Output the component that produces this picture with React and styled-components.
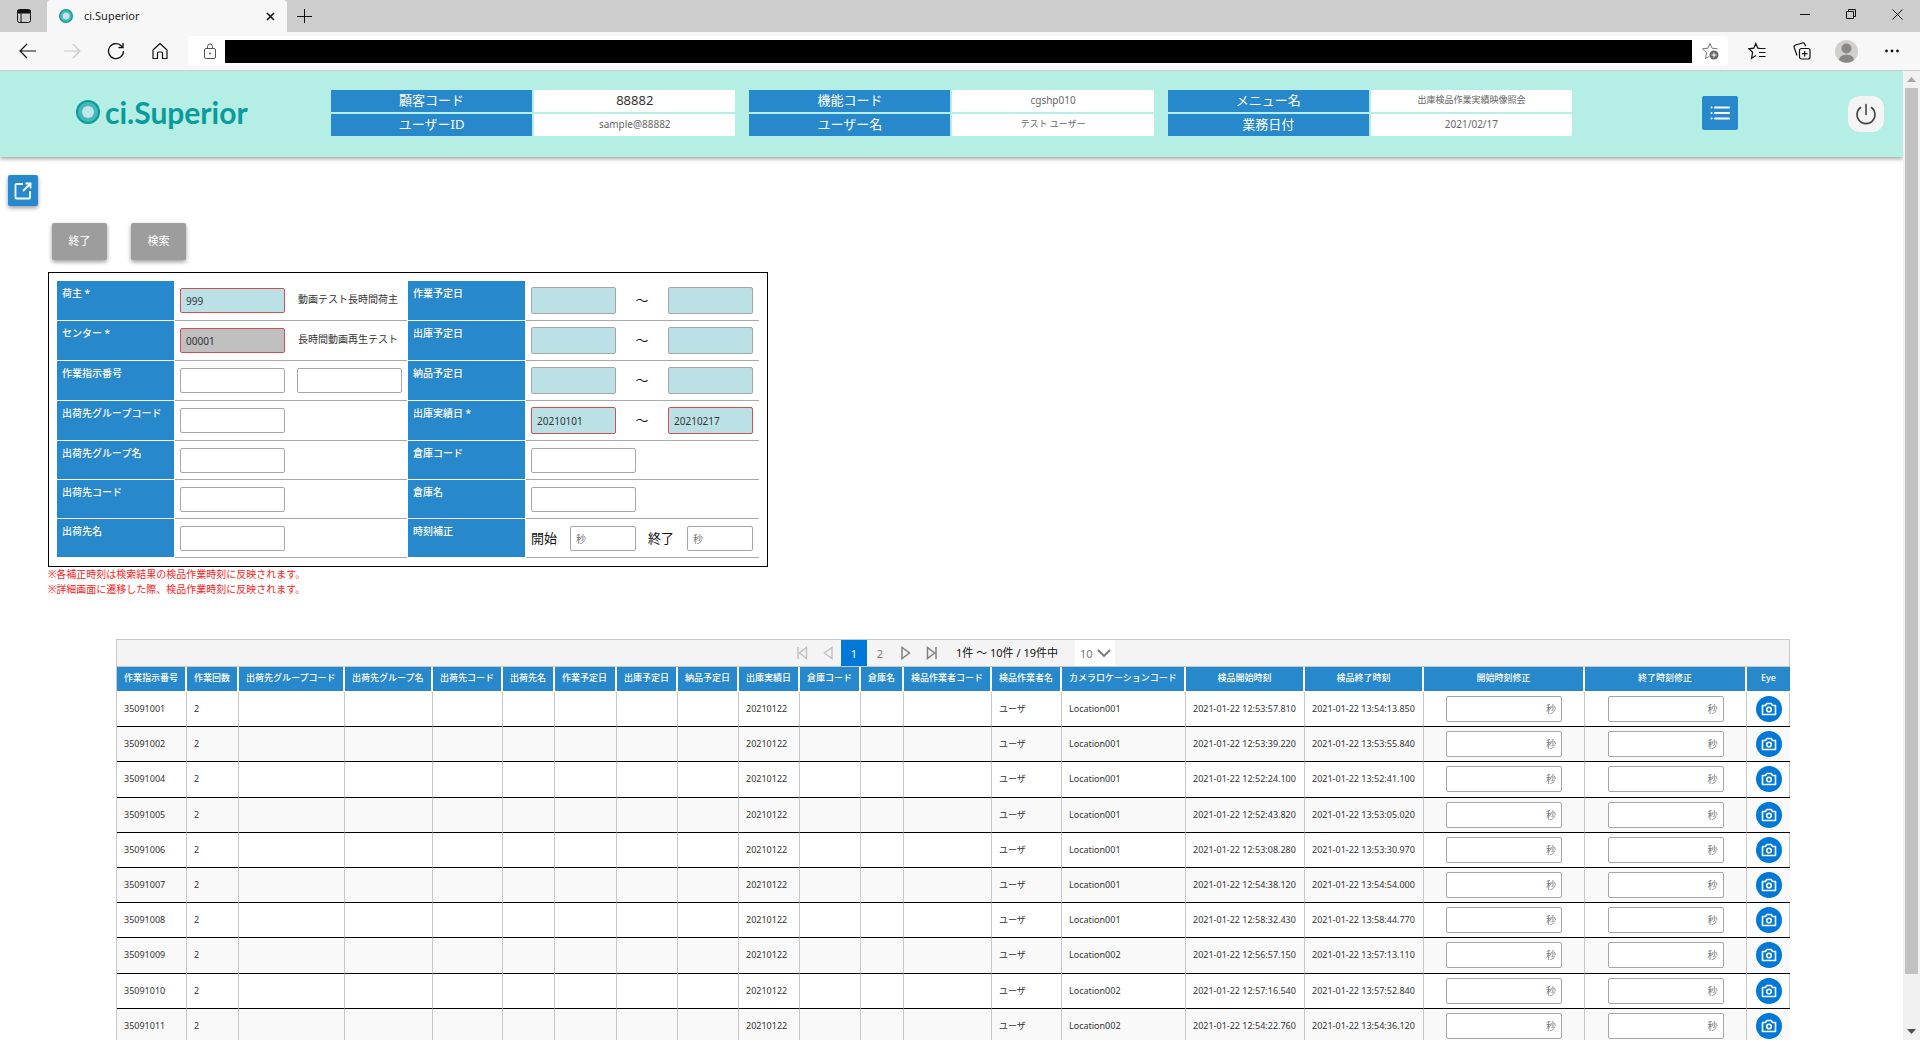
import React from 'react'
import styled, { createGlobalStyle, css } from 'styled-components'

const BLUE = '#2788cb'
const MINT = '#b5eee4'
const SANS = '"Noto Sans", "Noto Sans CJK JP", sans-serif'

const HEADER_INFO = [
	[{ label: '顧客コード', value: '88882', size: 13 }, { label: 'ユーザーID', value: 'sample@88882' }],
	[{ label: '機能コード', value: 'cgshp010' }, { label: 'ユーザー名', value: 'テスト ユーザー', size: 9 }],
	[{ label: 'メニュー名', value: '出庫検品作業実績映像照会', size: 9 }, { label: '業務日付', value: '2021/02/17' }],
]

const COLUMNS = [
	['作業指示番号', 70], ['作業回数', 52], ['出荷先グループコード', 106], ['出荷先グループ名', 88],
	['出荷先コード', 70], ['出荷先名', 52], ['作業予定日', 62], ['出庫予定日', 61], ['納品予定日', 61],
	['出庫実績日', 61], ['倉庫コード', 61], ['倉庫名', 43], ['検品作業者コード', 88], ['検品作業者名', 70],
	['カメラロケーションコード', 124], ['検品開始時刻', 119], ['検品終了時刻', 119],
	['開始時刻修正', 161], ['終了時刻修正', 162], ['Eye', 43],
]

const ROWS = [
	['35091001', 'Location001', '12:53:57.810', '13:54:13.850'],
	['35091002', 'Location001', '12:53:39.220', '13:53:55.840'],
	['35091004', 'Location001', '12:52:24.100', '13:52:41.100'],
	['35091005', 'Location001', '12:52:43.820', '13:53:05.020'],
	['35091006', 'Location001', '12:53:08.280', '13:53:30.970'],
	['35091007', 'Location001', '12:54:38.120', '13:54:54.000'],
	['35091008', 'Location001', '12:58:32.430', '13:58:44.770'],
	['35091009', 'Location002', '12:56:57.150', '13:57:13.110'],
	['35091010', 'Location002', '12:57:16.540', '13:57:52.840'],
	['35091011', 'Location002', '12:54:22.760', '13:54:36.120'],
]

const Icon = ({ size = 18, view = 18, width = 1, color = '#111', children }) => (
	<svg width={ size } height={ size } viewBox={ `0 0 ${ view } ${ view }` } fill="none" stroke={ color } strokeWidth={ width } aria-hidden="true">
		{ children }
	</svg>
)

const Ring = ({ width, height }) => (
	<svg width={ width } height={ height } viewBox="0 0 24 24" aria-hidden="true">
		<circle cx="12" cy="12" r="12" fill="#0a9b9b" />
		<circle cx="12" cy="12" r="10" fill="#45b7b7" />
		<circle cx="12" cy="12" r="6" fill="#bfe6ea" />
	</svg>
)

const Browser = () => (
	<>
		<TabStrip>
			<StripButton aria-label="タブ操作メニュー">
				<Icon size={ 16 } view={ 16 }>
					<rect x="1.5" y="1.5" width="13" height="13" rx="2" />
					<path d="M1.5 2.5h13v2.5h-13z" fill="#111" />
					<path d="M5 5v9.5" />
				</Icon>
			</StripButton>
			<Tab>
				<Ring width={ 14 } height={ 14 } />
				<TabTitle>ci.Superior</TabTitle>
				<TabButton aria-label="タブを閉じる">
					<Icon size={ 9 } view={ 9 } width={ 1.6 }><path d="M1 1l7 7M8 1l-7 7" /></Icon>
				</TabButton>
			</Tab>
			<TabButton aria-label="新しいタブ">
				<Icon size={ 16 } view={ 16 }><path d="M8.5 1v14M1 8.5h15" /></Icon>
			</TabButton>
			<WindowButtons>
				<TabButton aria-label="最小化"><Icon size={ 10 } view={ 10 }><path d="M0 5.5h10" /></Icon></TabButton>
				<TabButton aria-label="元に戻す">
					<Icon size={ 10 } view={ 10 }><path d="M.5 2.5h7v7h-7zM2.5 2.5v-2h7v7h-2" /></Icon>
				</TabButton>
				<TabButton aria-label="閉じる"><Icon size={ 11 } view={ 11 }><path d="M.5.5l10 10M10.5.5l-10 10" /></Icon></TabButton>
			</WindowButtons>
		</TabStrip>
		<Toolbar>
			<ToolButton aria-label="戻る"><Icon width={ 1.2 }><path d="M17 9H1.5M8 2L1 9l7 7" /></Icon></ToolButton>
			<ToolButton aria-label="進む" disabled><Icon color="#c9c9c9" width={ 1.2 }><path d="M1 9h15.5M10 2l7 7-7 7" /></Icon></ToolButton>
			<ToolButton aria-label="更新">
				<Icon width={ 1.3 }><path d="M16.5 9A7.5 7.5 0 1 1 14.7 4.2L16 5.5M16 1v4.5h-4.5" /></Icon>
			</ToolButton>
			<ToolButton aria-label="ホーム">
				<Icon width={ 1.2 }><path d="M2 8l7-6.5L16 8v8.5h-4.5V11a1 1 0 0 0-1-1h-3a1 1 0 0 0-1 1v5.5H2z" strokeLinejoin="round" /></Icon>
			</ToolButton>
			<AddressBar>
				<LockSlot>
					<Icon size={ 16 } view={ 16 } color="#555">
						<rect x="2.5" y="5.5" width="11" height="10" rx="1.5" />
						<path d="M5.5 5.5V3.5a2.5 2.5 0 0 1 5 0v2" />
						<circle cx="8" cy="10.5" r="1" fill="#555" stroke="none" />
					</Icon>
				</LockSlot>
				<Address aria-label="アドレス" readOnly />
				<ToolButton aria-label="お気に入りに追加">
					<Icon color="#777">
						<path d="M16.5 6.800l-5.500-.6L9 1.500 7 6.200l-5.500.6 4 3.800L4.500 16.500l4-2.200" />
						<circle cx="13" cy="13" r="4.500" fill="#666" stroke="none" />
						<path d="M13 10.500v5M10.500 13h5" stroke="#fff" />
					</Icon>
				</ToolButton>
			</AddressBar>
			<ToolButtons>
				<ToolButton aria-label="お気に入り">
					<Icon width={ 1.2 }><path d="M12.500 6.500L9.800 6.200 7.800 1.500 5.800 6.200 1 6.800l3.600 3.500-1 5.900 4.400-2.700M11.500 6.500h6M11 10.500h6.500M11 14.500h6.500" /></Icon>
				</ToolButton>
				<ToolButton aria-label="コレクション">
					<Icon width={ 1.2 }>
						<rect x="6.5" y="6.5" width="10.5" height="10.5" rx="2" />
						<path d="M11.7 9v5.5M9 11.7h5.5M4 13.5L1.2 5.5a2 2 0 0 1 1.3-2.5l7-2a2 2 0 0 1 2.4 1.2l.7 2" />
					</Icon>
				</ToolButton>
				<ToolButton aria-label="プロファイル">
					<Icon size={ 23 } view={ 23 } color="none">
						<circle cx="11.5" cy="11.5" r="11.5" fill="#d1cfcc" />
						<circle cx="11.5" cy="8.5" r="5" fill="#8a8683" />
						<path d="M4 20a7.5 5.5 0 0 1 15 0 11.500 11.500 0 0 1-15 0z" fill="#8a8683" />
					</Icon>
				</ToolButton>
				<ToolButton aria-label="設定など">
					<Icon color="none"><g fill="#111"><circle cx="3.500" cy="9" r="1.400" /><circle cx="9" cy="9" r="1.400" /><circle cx="14.500" cy="9" r="1.400" /></g></Icon>
				</ToolButton>
			</ToolButtons>
		</Toolbar>
	</>
)

const PageHeader = () => (
	<Header>
		<Logo>
			<Ring width={ 24 } height={ 26 } />
			<span>ci.Superior</span>
		</Logo>
		<InfoGroups>
			{ HEADER_INFO.map((group, i) => (
				<InfoGroup key={ i }>
					{ group.map(({ label, value, size }) => (
						<React.Fragment key={ label }>
							<InfoLabel>{ label }</InfoLabel>
							<InfoValue $size={ size }>{ value }</InfoValue>
						</React.Fragment>
					)) }
				</InfoGroup>
			)) }
		</InfoGroups>
		<HeaderButtons>
			<MenuButton aria-label="メニュー">
				<Icon size={ 20 } view={ 20 } color="#fff" width={ 2 }>
					<path d="M5 4.500h14M5 10h14M5 15.500h14M1.500 4.500h.1M1.500 10h.1M1.500 15.500h.1" strokeLinecap="round" />
				</Icon>
			</MenuButton>
			<PowerButton aria-label="ログアウト">
				<Icon size={ 22 } view={ 22 } color="#444" width={ 1.6 }>
					<path d="M11 1.500v10M5.500 4.500a9 9 0 1 0 11 0" strokeLinecap="round" />
				</Icon>
			</PowerButton>
		</HeaderButtons>
	</Header>
)

const DateRange = ({ name, from, to }) => (
	<>
		<DateInput aria-label={ `${ name } 開始` } defaultValue={ from } $required={ !!from } />
		<Tilde>～</Tilde>
		<DateInput aria-label={ `${ name } 終了` } defaultValue={ to } $required={ !!to } />
	</>
)

const SearchForm = () => (
	<Form>
		<FormLabel htmlFor="owner">荷主 *</FormLabel>
		<Field><TextInput id="owner" defaultValue="999" $required $tint="#bbe1e7" /><FieldNote>動画テスト長時間荷主</FieldNote></Field>
		<FormLabel as="span">作業予定日</FormLabel>
		<Field $date><DateRange name="作業予定日" /></Field>

		<FormLabel htmlFor="center">センター *</FormLabel>
		<Field><TextInput id="center" defaultValue="00001" readOnly $required $tint="#c0c0c0" /><FieldNote>長時間動画再生テスト</FieldNote></Field>
		<FormLabel as="span">出庫予定日</FormLabel>
		<Field $date><DateRange name="出庫予定日" /></Field>

		<FormLabel htmlFor="order">作業指示番号</FormLabel>
		<Field><TextInput id="order" /><TextInput aria-label="作業指示番号 終了" /></Field>
		<FormLabel as="span">納品予定日</FormLabel>
		<Field $date><DateRange name="納品予定日" /></Field>

		<FormLabel htmlFor="groupCode">出荷先グループコード</FormLabel>
		<Field><TextInput id="groupCode" /></Field>
		<FormLabel as="span">出庫実績日 *</FormLabel>
		<Field $date><DateRange name="出庫実績日" from="20210101" to="20210217" /></Field>

		<FormLabel htmlFor="groupName">出荷先グループ名</FormLabel>
		<Field><TextInput id="groupName" /></Field>
		<FormLabel htmlFor="warehouseCode">倉庫コード</FormLabel>
		<Field><TextInput id="warehouseCode" /></Field>

		<FormLabel htmlFor="shipCode">出荷先コード</FormLabel>
		<Field><TextInput id="shipCode" /></Field>
		<FormLabel htmlFor="warehouseName">倉庫名</FormLabel>
		<Field><TextInput id="warehouseName" /></Field>

		<FormLabel htmlFor="shipName">出荷先名</FormLabel>
		<Field><TextInput id="shipName" /></Field>
		<FormLabel as="span">時刻補正</FormLabel>
		<Field>
			<TimeLabel>開始<SecondsInput placeholder="秒" /></TimeLabel>
			<TimeLabel>終了<SecondsInput placeholder="秒" /></TimeLabel>
		</Field>
	</Form>
)

const Pager = () => (
	<PagerBar>
		<PageButton aria-label="最初のページ" disabled>
			<Icon size={ 14 } view={ 14 } color="#c2c2c2" width={ 1.5 }><path d="M3 1v12M11.500 1.500v11L4.500 7z" /></Icon>
		</PageButton>
		<PageButton aria-label="前のページ" disabled>
			<Icon size={ 14 } view={ 14 } color="#c2c2c2" width={ 1.5 }><path d="M11 1.500v11L3.500 7z" /></Icon>
		</PageButton>
		<PageButton $active>1</PageButton>
		<PageButton>2</PageButton>
		<PageButton aria-label="次のページ">
			<Icon size={ 14 } view={ 14 } color="#808080" width={ 1.5 }><path d="M3 1.500v11L10.500 7z" /></Icon>
		</PageButton>
		<PageButton aria-label="最後のページ">
			<Icon size={ 14 } view={ 14 } color="#808080" width={ 1.5 }><path d="M11 1v12M2.500 1.500v11L9.500 7z" /></Icon>
		</PageButton>
		<PagerText>1件 ～ 10件 / 19件中</PagerText>
		<PageSize>
			<select aria-label="表示件数" defaultValue="10">
				<option>10</option>
				<option>20</option>
			</select>
			<Icon size={ 14 } view={ 14 } color="#777" width={ 1.8 }><path d="M1 4l6 6 6-6" /></Icon>
		</PageSize>
	</PagerBar>
)

const Results = () => (
	<ResultPanel>
		<Pager />
		<Table>
			<colgroup>
				{ COLUMNS.map(([name, width]) => <Column key={ name } $width={ width } />) }
			</colgroup>
			<thead>
				<tr>{ COLUMNS.map(([name], i) => <HeadCell key={ name } $center={ i > 14 }>{ name }</HeadCell>) }</tr>
			</thead>
			<tbody>
				{ ROWS.map(([id, location, start, end]) => (
					<Row key={ id }>
						<Cell>{ id }</Cell>
						<Cell>2</Cell>
						{ [...Array(7)].map((_, i) => <Cell key={ i } />) }
						<Cell>20210122</Cell>
						<Cell /><Cell /><Cell />
						<Cell>ユーザ</Cell>
						<Cell>{ location }</Cell>
						<Cell>2021-01-22 { start }</Cell>
						<Cell>2021-01-22 { end }</Cell>
						<Cell><RowInput aria-label={ `${ id } 開始時刻修正` } placeholder="秒" /></Cell>
						<Cell><RowInput aria-label={ `${ id } 終了時刻修正` } placeholder="秒" /></Cell>
						<Cell>
							<EyeButton aria-label={ `${ id } 映像` }>
								<Icon size={ 16 } view={ 16 } color="#fff" width={ 1.6 }>
									<path d="M1.500 4.500h3l1.300-2h4.400l1.300 2h3v9h-13z" strokeLinejoin="round" />
									<circle cx="8" cy="8.500" r="2.300" />
								</Icon>
							</EyeButton>
						</Cell>
					</Row>
				)) }
			</tbody>
		</Table>
	</ResultPanel>
)

const App = () => (
	<Screen>
		<GlobalStyle />
		<Browser />
		<Viewport>
			<Page>
				<PageHeader />
				<OpenButton aria-label="別ウィンドウで開く">
					<Icon size={ 18 } view={ 18 } color="#fff" width={ 1.8 }>
						<path d="M9 2H2.500a1 1 0 0 0-1 1v12.500a1 1 0 0 0 1 1H15a1 1 0 0 0 1-1V9M11.500 1.500h5v5M16 2L9 9" />
					</Icon>
				</OpenButton>
				<Main>
					<Actions>
						<ActionButton>終了</ActionButton>
						<ActionButton>検索</ActionButton>
					</Actions>
					<SearchForm />
					<Notes>
						<p>※各補正時刻は検索結果の検品作業時刻に反映されます。</p>
						<p>※詳細画面に遷移した際、検品作業時刻に反映されます。</p>
					</Notes>
				</Main>
				<Results />
			</Page>
			<Scrollbar>
				<Arrow $color="#a3a3a3" viewBox="0 0 9 5"><path d="M0 5l4.500-5L9 5z" /></Arrow>
				<Thumb />
				<Track />
				<Arrow $color="#505050" viewBox="0 0 9 5"><path d="M0 0l4.500 5L9 0z" /></Arrow>
			</Scrollbar>
		</Viewport>
	</Screen>
)

const GlobalStyle = createGlobalStyle`
	* {
		box-sizing: border-box;
	}

	body {
		margin: 0;
		background: #fff;
		color: #333;
		font-family: ${ SANS };
		overflow: hidden;
	}

	button, input, select {
		margin: 0;
		padding: 0;
		border: 0;
		background: none;
		color: inherit;
		font-family: inherit;
	}

	svg {
		flex: none;
	}
`

const Screen = styled.div`
	display: flex;
	flex-direction: column;
	height: 100vh;
`

const TabStrip = styled.div`
	display: flex;
	flex: none;
	height: 32px;
	background: #cdcdcd;
`

const TabButton = styled.button`
	display: flex;
	justify-content: center;
	align-items: center;
	width: 34px;
`

const StripButton = styled(TabButton)`
	width: 47px;
`

const Tab = styled.div`
	display: flex;
	align-items: center;
	width: 240px;
	padding-left: 12px;
	border-radius: 4px 4px 0 0;
	background: #f7f7f7;
`

const TabTitle = styled.span`
	flex: 1;
	padding-left: 11px;
	color: #222;
	font-size: 11px;
	line-height: 14px;
`

const WindowButtons = styled.div`
	display: flex;
	margin-left: auto;

	${ TabButton } {
		width: 46px;
		height: 28px;
	}
`

const Toolbar = styled.div`
	display: flex;
	flex: none;
	align-items: center;
	height: 39px;
	padding-left: 6px;
	border-bottom: 1px solid #ccc;
	background: #f7f7f7;
`

const ToolButton = styled.button`
	display: flex;
	justify-content: center;
	align-items: center;
	width: 44px;
	height: 30px;
`

const AddressBar = styled.div`
	display: flex;
	flex: 1;
	align-items: center;
	height: 30px;
	margin-left: 6px;
	border-radius: 4px;
	background: #fff;

	${ ToolButton } {
		width: 36px;
	}
`

const LockSlot = styled.span`
	display: flex;
	justify-content: flex-end;
	width: 37px;
	padding-right: 7px;
`

const Address = styled.input`
	flex: 1;
	height: 23px;
	background: #000;
`

const ToolButtons = styled.div`
	display: flex;
	padding: 0 6px;

	${ ToolButton } {
		width: 45px;
	}
`

const Viewport = styled.div`
	display: flex;
	flex: 1;
	min-height: 0;
`

const Page = styled.div`
	flex: 1;
	min-width: 0;
	overflow: hidden;
`

const Scrollbar = styled.div`
	display: flex;
	flex-direction: column;
	align-items: center;
	width: 17px;
	background: #f1f1f1;
`

const Arrow = styled.svg`
	width: 9px;
	height: 5px;
	margin: 6px 0;
	fill: ${ ({ $color }) => $color };
`

const Thumb = styled.div`
	flex: 18;
	width: 13px;
	background: #c1c1c1;
`

const Track = styled.div`
	flex: 1;
`

const Header = styled.header`
	display: grid;
	grid-template-columns: 331fr 1241fr 331fr;
	height: 86px;
	background: ${ MINT };
	box-shadow: 0 2px 4px rgba(0, 0, 0, .35);
`

const Logo = styled.div`
	display: flex;
	align-items: center;
	gap: 5px;
	padding: 0 0 4px 76px;
	color: #0a9b9b;
	font: 700 30px/34px Lato, sans-serif;
`

const InfoGroups = styled.div`
	display: grid;
	grid-template-columns: repeat(3, 1fr);
	gap: 14px;
	padding-top: 19px;
`

const InfoGroup = styled.div`
	display: grid;
	grid-template-columns: 1fr 1fr;
	grid-auto-rows: 22px;
	gap: 2px;
	line-height: 20px;
	text-align: center;
`

const InfoLabel = styled.div`
	background: ${ BLUE };
	color: #fff;
	font-size: 13px;
`

const InfoValue = styled.div`
	background: #fff;
	color: ${ ({ $size }) => $size === 13 ? '#333' : '#666' };
	font-size: ${ ({ $size = 10 }) => $size }px;
`

const HeaderButtons = styled.div`
	display: flex;
	justify-content: flex-end;
	align-items: flex-start;
	gap: 110px;
	padding: 25px 19px 0 0;
`

const MenuButton = styled.button`
	display: flex;
	justify-content: center;
	align-items: center;
	width: 36px;
	height: 34px;
	border-radius: 2px;
	background: ${ BLUE };
`

const PowerButton = styled(MenuButton)`
	height: 36px;
	border-radius: 12px;
	background: #f4f4f4;
`

const OpenButton = styled(MenuButton)`
	width: 30px;
	height: 31px;
	margin: 18px 0 0 8px;
	box-shadow: 0 2px 4px rgba(0, 0, 0, .4);
`

const Main = styled.main`
	padding: 17px 48px 0;
`

const Actions = styled.div`
	display: flex;
	gap: 24px;
	padding: 0 4px 12px;
`

const ActionButton = styled.button`
	width: 55px;
	height: 37px;
	padding-bottom: 3px;
	border-radius: 2px;
	background: #9d9d9d;
	box-shadow: 0 2px 4px rgba(0, 0, 0, .4);
	color: #fff;
	font-size: 11px;
`

const Form = styled.form`
	display: grid;
	grid-template-columns: 117px 232px 117px 233px;
	grid-template-rows: repeat(4, 40px) repeat(3, 39px);
	column-gap: 1px;
	width: 720px;
	padding: 8px;
	border: 1px solid #000;
`

const FormLabel = styled.label`
	padding: 5px;
	border-bottom: 1px solid #fff;
	background: ${ BLUE };
	color: #fff;
	font-size: 10px;
	font-weight: 500;
	line-height: 14px;
`

const Field = styled.div`
	display: flex;
	align-items: flex-start;
	gap: ${ ({ $date }) => $date ? 0 : 12 }px;
	padding: ${ ({ $date }) => $date ? 6 : 7 }px 5px 0;
	border-bottom: 1px solid #a9a9a9;
`

const inputBox = css`
	border: 1px solid ${ ({ $required }) => $required ? '#cf5050' : '#a6a6a6' };
	border-radius: 2px;
	background: ${ ({ $tint = '#fff' }) => $tint };
	color: #333;
	font-size: 10px;

	&::placeholder {
		color: #777;
		opacity: 1;
	}
`

const TextInput = styled.input`
	${ inputBox }
	width: 105px;
	height: 25px;
	padding: 0 5px;
`

const DateInput = styled.input.attrs({ $tint: '#bbe1e7' })`
	${ inputBox }
	width: 85px;
	height: 27px;
	padding: 0 5px;
`

const SecondsInput = styled(TextInput)`
	width: 66px;
`

const Tilde = styled.span`
	width: 52px;
	color: #111;
	font-size: 13px;
	line-height: 26px;
	text-align: center;
`

const FieldNote = styled.span`
	padding-left: 1px;
	font-size: 10px;
	line-height: 23px;
	white-space: nowrap;
`

const TimeLabel = styled.label`
	display: flex;
	align-items: center;
	gap: 13px;
	color: #111;
	font-size: 13px;
	line-height: 23px;
`

const Notes = styled.div`
	color: #f22;
	font-size: 10px;
	line-height: 15px;

	p {
		margin: 0;
	}
`

const ResultPanel = styled.section`
	margin: 42px 113px 0 116px;
	border: 1px solid #c8c8c8;
	border-bottom: 0;
`

const PagerBar = styled.div`
	display: flex;
	justify-content: center;
	height: 27px;
	padding-right: 2px;
	border-bottom: 1px solid #c8c8c8;
	background: #f4f4f4;
`

const PageButton = styled.button`
	display: flex;
	justify-content: center;
	align-items: center;
	width: 26px;
	background: ${ ({ $active }) => $active ? '#0078d7' : 'none' };
	color: ${ ({ $active }) => $active ? '#fff' : '#777' };
	font-size: 11px;
`

const PagerText = styled.span`
	padding: 0 17px 0 11px;
	color: #111;
	font-size: 11px;
	line-height: 25px;
`

const PageSize = styled.span`
	display: flex;
	align-items: center;
	gap: 4px;
	padding: 0 4px 0 5px;
	background: #fff;
	color: #777;

	select {
		appearance: none;
		font-size: 11px;
	}
`

const Table = styled.table`
	width: 100%;
	height: 377px;
	border-collapse: separate;
	border-spacing: 0;
	table-layout: fixed;
	font-size: 9px;
	line-height: 12px;
`

const Column = styled.col`
	width: ${ ({ $width }) => $width }px;
`

const HeadCell = styled.th`
	height: 25px;
	padding: 0 0 2px ${ ({ $center }) => $center ? 0 : 7 }px;
	border-right: 2px solid #fff;
	border-bottom: 1px solid #fff;
	background: ${ BLUE };
	color: #fff;
	font-weight: 500;
	text-align: ${ ({ $center }) => $center ? 'center' : 'left' };
	white-space: nowrap;

	&:last-child {
		border-right: 0;
	}
`

const Cell = styled.td`
	height: 35px;
	padding: 0 7px;
	border-right: 1px solid #c8c8c8;
	border-bottom: 1px solid #000;
	white-space: nowrap;

	&:last-child {
		border-right: 0;
	}
`

const Row = styled.tr`
	&:nth-child(even) {
		background: #f9f9f9;
	}
`

const RowInput = styled.input`
	${ inputBox }
	display: block;
	width: 116px;
	height: 26px;
	margin: 0 auto;
	padding: 0 5px;
	text-align: right;
`

const EyeButton = styled.button`
	display: flex;
	justify-content: center;
	align-items: center;
	width: 26px;
	height: 26px;
	margin: 0 auto;
	border-radius: 50%;
	background: #0078d7;
`

export default App
